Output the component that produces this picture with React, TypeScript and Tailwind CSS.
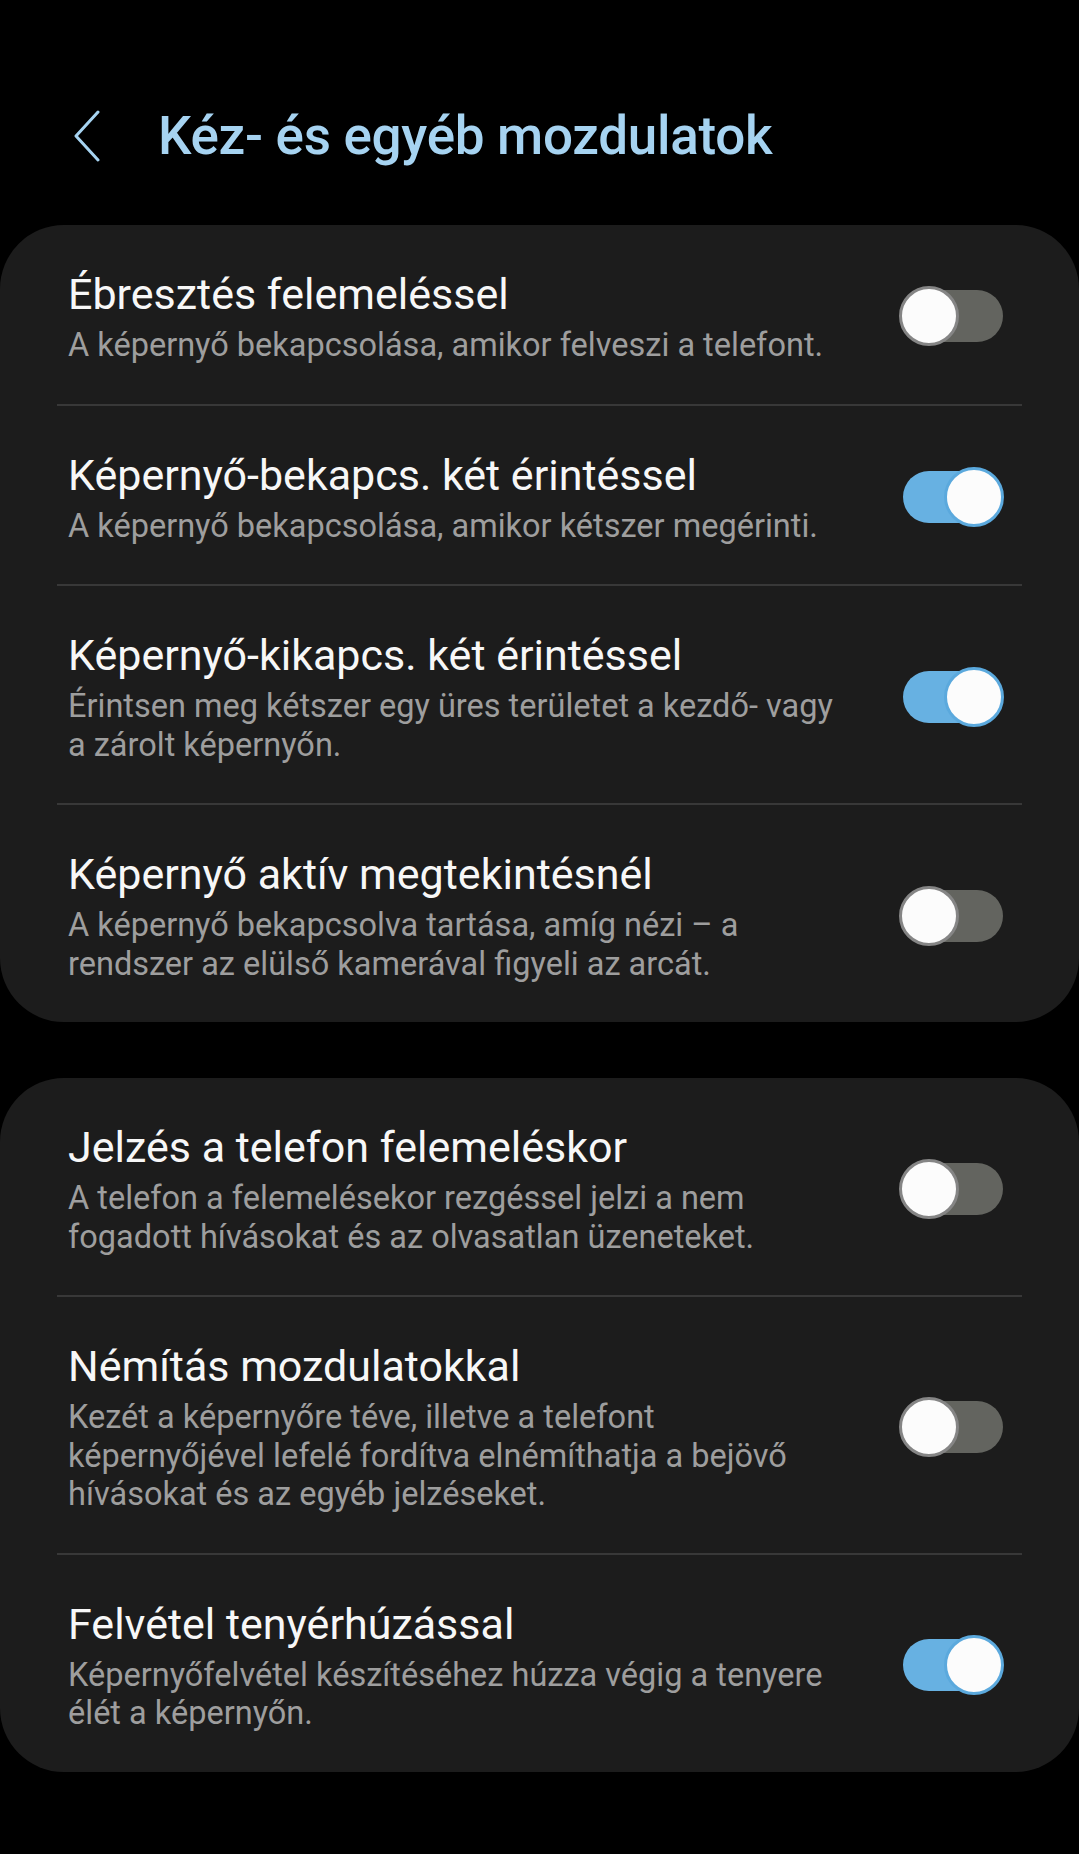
import React from 'react';

interface Setting {
  title: string;
  lines: string[];
  on: boolean;
}

const groups: Setting[][] = [
  [
    {
      title: 'Ébresztés felemeléssel',
      lines: ['A képernyő bekapcsolása, amikor felveszi a telefont.'],
      on: false,
    },
    {
      title: 'Képernyő-bekapcs. két érintéssel',
      lines: ['A képernyő bekapcsolása, amikor kétszer megérinti.'],
      on: true,
    },
    {
      title: 'Képernyő-kikapcs. két érintéssel',
      lines: ['Érintsen meg kétszer egy üres területet a kezdő- vagy', 'a zárolt képernyőn.'],
      on: true,
    },
    {
      title: 'Képernyő aktív megtekintésnél',
      lines: ['A képernyő bekapcsolva tartása, amíg nézi – a', 'rendszer az elülső kamerával figyeli az arcát.'],
      on: false,
    },
  ],
  [
    {
      title: 'Jelzés a telefon felemeléskor',
      lines: ['A telefon a felemelésekor rezgéssel jelzi a nem', 'fogadott hívásokat és az olvasatlan üzeneteket.'],
      on: false,
    },
    {
      title: 'Némítás mozdulatokkal',
      lines: [
        'Kezét a képernyőre téve, illetve a telefont',
        'képernyőjével lefelé fordítva elnémíthatja a bejövő',
        'hívásokat és az egyéb jelzéseket.',
      ],
      on: false,
    },
    {
      title: 'Felvétel tenyérhúzással',
      lines: ['Képernyőfelvétel készítéséhez húzza végig a tenyere', 'élét a képernyőn.'],
      on: true,
    },
  ],
];

function Toggle({ on }: { on: boolean }) {
  return (
    <div className={`relative w-[100px] h-[52px] rounded-full shrink-0 ${on ? 'bg-[#67b1e2]' : 'bg-[#63645f]'}`}>
      <div
        className={`absolute top-[-4px] w-[60px] h-[60px] rounded-full bg-[#fcfcfc] border-[3px] ${
          on ? 'right-[-1px] border-[#5ba9dd]' : 'left-[-4px] border-[#858585]'
        }`}
      />
    </div>
  );
}

export default function App() {
  return (
    <div className="min-h-[1854px] bg-black" style={{ fontFamily: 'Roboto, "Noto Sans", sans-serif' }}>
      {/* header */}
      <div className="h-[225px] pt-[100px]">
        <div className="flex items-center h-[72px]">
          <svg className="ml-[73px] w-[28px] h-[52px]" viewBox="0 0 28 52" fill="none">
            <path d="M25 2 L3 26 L25 50" stroke="#a6d3f1" strokeWidth={3} strokeLinecap="round" strokeLinejoin="round" />
          </svg>
          <h1 className="ml-[57px] text-[53px] font-medium leading-[72px] text-[#a6d3f1] tracking-[-0.3px]">
            Kéz- és egyéb mozdulatok
          </h1>
        </div>
      </div>

      <div className="flex flex-col gap-[56px]">
        {groups.map((group, gi) => (
          <div key={gi} className="bg-[#1c1c1c] rounded-[64px] px-[57px]">
            {group.map((item, i) => (
              <div
                key={item.title}
                className={`flex items-center pl-[11px] pr-[19px] pt-[43px] pb-[39px] ${
                  i < group.length - 1 ? 'border-b-2 border-[#383838]' : ''
                }`}
              >
                <div className="flex-1">
                  <div className="text-[43px] leading-[52px] text-[#f7f7f7]">{item.title}</div>
                  <div className="mt-[6px] text-[32.5px] leading-[38.5px] text-[#9e9e9e]">
                    {item.lines.map((l) => (
                      <div key={l} className="whitespace-nowrap">
                        {l}
                      </div>
                    ))}
                  </div>
                </div>
                <Toggle on={item.on} />
              </div>
            ))}
          </div>
        ))}
      </div>
    </div>
  );
}
